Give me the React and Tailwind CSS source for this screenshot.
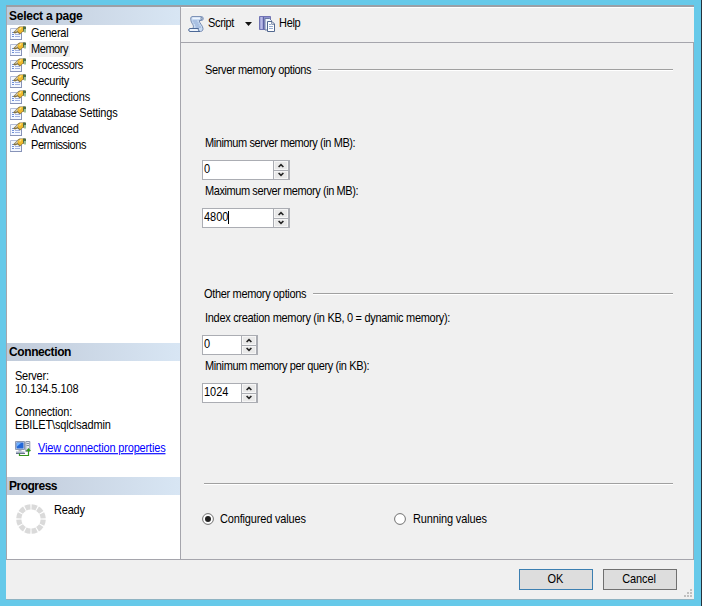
import React from 'react';

const pages = [
  { name: 'General', spacing: 'tracking-[-0.25px]' },
  { name: 'Memory', spacing: 'tracking-[-0.45px]', active: true },
  { name: 'Processors', spacing: 'tracking-[-0.3px]' },
  { name: 'Security', spacing: 'tracking-[-0.2px]' },
  { name: 'Connections', spacing: 'tracking-[-0.2px]' },
  { name: 'Database Settings', spacing: 'tracking-[-0.2px]' },
  { name: 'Advanced', spacing: 'tracking-[-0.15px]' },
  { name: 'Permissions', spacing: 'tracking-[-0.45px]' },
];

const PageIcon = () => (
  <svg width="16" height="14" viewBox="0 0 16 14" className="shrink-0">
    <path d="M.5 2.500h11v11H.5z" fill="#f4f8ff" stroke="#b3bdd8" />
    <path d="M0 13h12v1H0zM11 7h1v7h-1z" fill="#8793b8" />
    <path d="M2 6.500h2M2 8.500h2M2 10.500h2" stroke="#6f8fd6" />
    <path d="M5 8.500h5M5 10.500h5" stroke="#a3b3e0" />
    <path d="M3 6.500 8 1.500 9.500.500H15v5l-2.500.500-2.500 2.500L7.500 6.500 5 7.500z" fill="#85733f" />
    <path d="M4.500 5.800 8 2.300 9.500 2.800 7 5.500z" fill="#cfcbbb" />
    <path d="M7.500 3.500 10 1h3v4L10.300 7.300 8 5.500z" fill="#f0b92c" />
    <path d="M9 3 10.500 1.500H12L10 4z" fill="#ffe58a" />
    <path d="M13 .500h3v3l-3 1z" fill="#4f6e43" />
    <path d="M14 3h2v3.500h-2z" fill="#9cc29a" />
  </svg>
);

const ScriptIcon = () => (
  <svg width="16" height="16" viewBox="0 0 16 16" className="shrink-0">
    <path d="M4 .600h9.500c2.300 0 2.300 3.900 0 3.900h-2.300c.2 3.200 3.800 4.900 3.800 8.200 0 1.700-1 2.800-2.500 2.800H5V12c1.500-2.500-1.300-4.200-2-7.200C2.500 2.300 2.700.900 4 .600z" fill="#c9dbf2" stroke="#7489b0" />
    <path d="M4.500 1.500h8V3h-8z" fill="#eef5ff" />
    <path d="M4.500 5h5M5.500 7h5M7 9h4.500M7.500 11H13" stroke="#8ba6d2" />
    <path d="M13 1.300c1.500.200 1.500 2.500 0 2.500z" fill="#fff" stroke="#5d7398" strokeWidth=".7" />
    <path d="M2 12.500h8.500c-.600 1 .300 2.900 1.500 3H2C.300 15.500.300 12.500 2 12.500z" fill="#edf4fd" stroke="#4c6896" />
  </svg>
);

const HelpIcon = () => (
  <svg width="16" height="16" viewBox="0 0 16 16" className="shrink-0">
    <path d="M.5.500h11v13H.5z" fill="#8f92cf" stroke="#7073b3" />
    <path d="M1.500 1h2v12h-2z" fill="#b9bbe6" />
    <path d="M4 1h1v12H4z" fill="#5f63a5" />
    <path d="M6 2.500h4.500l2 2V14H6z" fill="#eef3fb" stroke="#6a7ba2" />
    <path d="M8.500 5.500H13l2.500 2.500v7.500h-7z" fill="#fff" stroke="#52688f" />
    <path d="M12.700 5.700v2.600h2.600" fill="none" stroke="#52688f" strokeWidth=".8" />
    <path d="M10 8.500h2M10 10.500h4M10 12.500h4" stroke="#8da5cb" strokeWidth=".9" />
  </svg>
);

const ConnectionIcon = () => (
  <svg width="16" height="16" viewBox="0 0 16 16" className="shrink-0">
    <path d="M.5.500h9v8h-9z" fill="#cfd8e6" stroke="#8d9ab3" />
    <path d="M1.500 1.500h7v6h-7z" fill="#2267d8" />
    <path d="M2 2h4L2 5.500z" fill="#6fb5ff" />
    <path d="M3.500 9h3v1.200h-3zM1 10.500h8.500v2H1z" fill="#a7b2c7" />
    <path d="M1 12.500h9" stroke="#66738c" />
    <path d="M10.800.500h4v10h-4z" fill="#e4e8ef" stroke="#8c98ac" />
    <path d="M11.500 2.500h2.600M11.500 4.500h2.600" stroke="#8794aa" />
    <path d="M4.500 12.500v2h9V9" fill="none" stroke="#33951c" strokeWidth="1.200" />
    <path d="m10.800 10 2.700-3 2.500 3z" fill="#33951c" />
  </svg>
);

const ProgressRing = () => (
  <svg width="30" height="30" viewBox="0 0 30 30" className="shrink-0">
    <circle cx="15" cy="15" r="12.200" fill="none" stroke="#dadada" strokeWidth="5.200" pathLength="120" strokeDasharray="8.200 1.800" strokeDashoffset="-.9" />
  </svg>
);

// narrow dialog lettering: stretched upwards from the baseline
const Text = ({ children, className = '' }) => (
  <span className={`inline-block origin-[50%_75%] scale-y-[1.12] whitespace-nowrap ${className}`}>{children}</span>
);

const Header = ({ children, spacing }) => (
  <div className="h-[18px] shrink-0 bg-gradient-to-r from-[#c1cbda] to-[#d8e6f4] pl-0.5 font-bold text-[12px] leading-[18px]">
    <span className={spacing}>{children}</span>
  </div>
);

const GroupLine = ({ title, spacing }) => (
  <div className="flex h-4 items-center">
    {title && <Text className={`mr-[7px] leading-4 ${spacing}`}>{title}</Text>}
    <div className="h-0.5 flex-1 border-t border-b border-t-[#a0a0a0] border-b-white" />
  </div>
);

const FieldLabel = ({ children, spacing }) => (
  <div className="flex h-[25px] pl-[3px] leading-4">
    <Text className={`h-4 ${spacing}`}>{children}</Text>
  </div>
);

const Spinner = ({ value, width, focused }) => (
  <div className={`flex h-5 border border-[#abadb3] bg-white ${width}`}>
    <div className="flex flex-1 items-start pl-[1px] leading-[17px]">
      <Text>{value}</Text>
      {focused && <span className="mt-0.5 h-[13px] w-px bg-black" />}
    </div>
    <div className="flex w-4 flex-col gap-px border-r border-l border-[#abadb3] bg-[#abadb3]">
      <div className="flex flex-1 items-center justify-center border border-[#f6f6f6] bg-[#e9e9e9]">
        <svg width="6" height="5" viewBox="0 0 6 5"><path d="M.6 4 3 1.600 5.400 4" fill="none" stroke="#222" strokeWidth="1.600" /></svg>
      </div>
      <div className="flex flex-1 items-center justify-center border border-[#f6f6f6] bg-[#e9e9e9]">
        <svg width="6" height="5" viewBox="0 0 6 5"><path d="M.6 1 3 3.400 5.400 1" fill="none" stroke="#222" strokeWidth="1.600" /></svg>
      </div>
    </div>
  </div>
);

const Radio = ({ label, checked, spacing, width }) => (
  <div className={`flex items-center ${width}`}>
    <svg width="12" height="12" viewBox="0 0 12 12" className="mb-px shrink-0">
      <circle cx="6" cy="6" r="5.400" fill="#fff" stroke="#707070" />
      {checked && <circle cx="6" cy="6" r="3" fill="#222" />}
    </svg>
    <Text className={`leading-4 ${spacing}`}>{label}</Text>
  </div>
);

const Sidebar = () => (
  <div className="flex w-[174px] shrink-0 flex-col border-r border-[#a5a5ac] bg-white">
    <Header spacing="tracking-[-0.25px]">Select a page</Header>
    <div className="flex h-[318px] flex-col">
      {pages.map((page) => (
        <div key={page.name} className="flex h-4 items-center pl-[3px]">
          <PageIcon />
          <span className={`ml-[3px] flex h-4 pr-0.5 pl-[2px] leading-4 ${page.active ? 'bg-[#f0f0f0]' : ''}`}>
            <Text className={page.spacing}>{page.name}</Text>
          </span>
        </div>
      ))}
    </div>
    <Header spacing="tracking-[-0.4px]">Connection</Header>
    <div className="flex h-[116px] flex-col items-start pt-[9px] pl-2 leading-[13px]">
      <Text className="tracking-[-0.25px]">Server:</Text>
      <Text className="tracking-[-0.05px]">10.134.5.108</Text>
      <Text className="mt-[10px] tracking-[-0.15px]">Connection:</Text>
      <Text className="tracking-[-0.15px]">EBILET\sqlclsadmin</Text>
      <div className="mt-[9px] flex items-center">
        <ConnectionIcon />
        <Text className="mb-[2px] ml-[7px] tracking-[-0.17px]">
          <a className="text-[#0000ff] underline underline-offset-1">View connection properties</a>
        </Text>
      </div>
    </div>
    <Header spacing="tracking-[-0.5px]">Progress</Header>
    <div className="flex items-start pt-[9px] pl-[9px]">
      <ProgressRing />
      <Text className="ml-2 leading-[13px] tracking-[-0.2px]">Ready</Text>
    </div>
  </div>
);

const App = () => {
  return (
    <div className="flex h-[606px] w-[702px] overflow-hidden border-r border-[#25323b] bg-[#66c9e9] pt-[5px] pl-[6px] font-['Liberation_Sans',Arial,sans-serif] text-[11px] text-black">
      <div className="relative flex h-[595px] w-[688px] flex-col border-t-2 border-b border-t-[#9b9fa6] border-b-[#8fb3c2] bg-[#f0f0f0]">
        <div className="flex h-[553px] border-b border-l border-[#a5a5ac]">
          <Sidebar />
          <div className="flex flex-1 flex-col">
            <div className="flex h-[36px] shrink-0 items-center border-t border-b border-t-white border-b-[#a5a5ac] pb-[3px] pl-[7px]">
              <ScriptIcon />
              <span className="ml-1 flex w-[37px]"><Text className="tracking-[-0.35px]">Script</Text></span>
              <svg width="7" height="4" viewBox="0 0 7 4"><path d="M0 0h7L3.500 4z" fill="#111" /></svg>
              <span className="ml-[7px] flex"><HelpIcon /></span>
              <Text className="ml-1 tracking-[-0.3px]">Help</Text>
            </div>
            <div className="flex flex-1 flex-col border-r border-[#a5a5ac] pt-[19px] pr-5 pl-[21px]">
              <div className="pl-[3px]"><GroupLine title="Server memory options" spacing="tracking-[-0.36px]" /></div>
              <div className="mt-[57px]"><FieldLabel spacing="tracking-[-0.41px]">Minimum server memory (in MB):</FieldLabel></div>
              <Spinner value="0" width="w-[88px]" />
              <div className="mt-[3px]"><FieldLabel spacing="tracking-[-0.42px]">Maximum server memory (in MB):</FieldLabel></div>
              <Spinner value="4800" width="w-[88px]" focused />
              <div className="mt-[58px] pl-[2px]"><GroupLine title="Other memory options" spacing="tracking-[-0.33px]" /></div>
              <div className="mt-2"><FieldLabel spacing="tracking-[-0.3px]">Index creation memory (in KB, 0 = dynamic memory):</FieldLabel></div>
              <Spinner value="0" width="w-[56px]" />
              <div className="mt-[3px]"><FieldLabel spacing="tracking-[-0.38px]">Minimum memory per query (in KB):</FieldLabel></div>
              <Spinner value="1024" width="w-[56px]" />
              <div className="mt-[73px] pl-[2px]"><GroupLine /></div>
              <div className="mt-[19px] flex">
                <Radio label="Configured values" width="w-48" spacing="ml-[6px] tracking-[-0.17px]" checked />
                <Radio label="Running values" width="w-32" spacing="ml-[7px] tracking-[-0.15px]" />
              </div>
            </div>
          </div>
        </div>
        <div className="flex flex-1 justify-end gap-[10px] pt-[9px] pr-[17px]">
          <button className="flex h-[21px] w-[74px] items-center justify-center border border-[#3c7fb1] bg-[#dddddd]"><Text className="mr-px">OK</Text></button>
          <button className="flex h-[21px] w-[74px] items-center justify-center border border-[#707070] bg-[#dddddd]"><Text className="mr-[2px] tracking-[-0.1px]">Cancel</Text></button>
        </div>
        <svg width="8" height="8" viewBox="0 0 8 8" shapeRendering="crispEdges" className="absolute right-[2px] bottom-[2px]">
          <path d="M6 0h2v2H6zM3 3h2v2H3zM6 3h2v2H6zM0 6h2v2H0zM3 6h2v2H3zM6 6h2v2H6z" fill="#c0c0c0" />
        </svg>
      </div>
    </div>
  );
};

export default App;
